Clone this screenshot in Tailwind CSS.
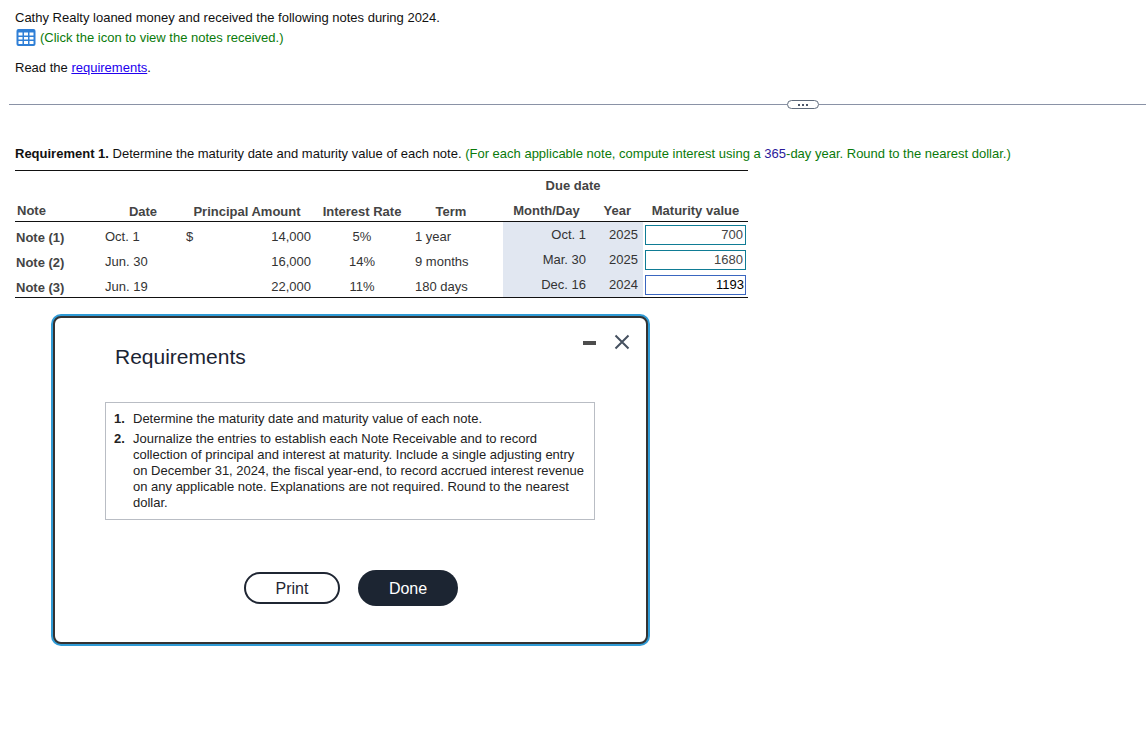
<!DOCTYPE html>
<html lang="en">
<head>
<meta charset="utf-8">
<title>Notes</title>
<script src="https://cdn.jsdelivr.net/npm/@tailwindcss/browser@4"></script>
</head>
<body class="bg-white font-['Liberation_Sans',Arial,sans-serif] text-[13px] text-[#111]">
<div class="relative w-[1146px] h-[756px] overflow-hidden">

    <!-- Question text -->
    <div class="pl-[15px] pt-[10px]">
        <p class="h-[15px] leading-[15px]">Cathy Realty loaned money and received the following notes during 2024.</p>
        <div class="flex items-center h-[20px] mt-[3px] text-[#0a7a0a]">
            <svg class="w-[20px] h-[17px] ml-[1px] -translate-y-px shrink-0" viewBox="0 0 20 17">
                <rect x="0.5" y="0" width="19" height="17" rx="2" fill="#2f7fd6"></rect>
                <g fill="#fff">
                    <rect x="2.5" y="3.5" width="4" height="3"></rect><rect x="8" y="3.5" width="4" height="3"></rect><rect x="13.5" y="3.5" width="4" height="3"></rect>
                    <rect x="2.5" y="8" width="4" height="2.5"></rect><rect x="8" y="8" width="4" height="2.5"></rect><rect x="13.5" y="8" width="4" height="2.5"></rect>
                    <rect x="2.5" y="12" width="4" height="3"></rect><rect x="8" y="12" width="4" height="3"></rect><rect x="13.5" y="12" width="4" height="3"></rect>
                </g>
            </svg>
            <span class="ml-[4px]">(Click the icon to view the notes received.)</span>
        </div>
        <p class="h-[15px] leading-[15px] mt-[12px]">Read the <a href="#" class="text-[#2200ee] underline">requirements</a>.</p>
    </div>

    <!-- Divider -->
    <div class="flex items-center ml-[9px] mt-[25px] h-[9px]">
        <div class="w-[778px] h-px bg-[#8a92a6]"></div>
        <div class="w-[32px] h-[9px] rounded-full border border-[#5f6b7c] flex items-center justify-center gap-[2px] bg-white">
            <span class="w-[2px] h-[2px] bg-[#4a5568]"></span><span class="w-[2px] h-[2px] bg-[#4a5568]"></span><span class="w-[2px] h-[2px] bg-[#4a5568]"></span>
        </div>
        <div class="flex-1 h-px bg-[#8a92a6]"></div>
    </div>

    <!-- Requirement 1 -->
    <p class="pl-[15px] mt-[37px] h-[15px] leading-[15px]"><b class="font-bold">Requirement 1.</b> Determine the maturity date and maturity value of each note. <span class="text-[#0a7a0a]">(For each applicable note, compute interest using a <span class="text-[#2a1a9a]">365</span>-day year. Round to the nearest dollar.)</span></p>

    <!-- Notes table -->
    <table class="ml-[15px] mt-[9px] w-[733px] table-fixed border-collapse border-t border-b border-[#111] text-[#333] leading-[15px]">
        <colgroup>
            <col class="w-[85px]"><col class="w-[86px]"><col class="w-[130px]"><col class="w-[92px]"><col class="w-[95px]"><col class="w-[89px]"><col class="w-[51px]"><col class="w-[105px]">
        </colgroup>
        <thead class="font-bold text-[#444]">
            <tr class="h-[28px]">
                <th colspan="5"></th>
                <th colspan="2" class="font-bold text-center pt-[2px]">Due date</th>
                <th></th>
            </tr>
            <tr class="h-[23px] border-b border-[#111]">
                <th class="font-bold text-left pl-[2px] pt-[2px]">Note</th>
                <th class="font-bold text-center pt-[4px]">Date</th>
                <th class="font-bold text-center pr-[8px] pt-[4px]">Principal Amount</th>
                <th class="font-bold text-center pt-[4px]">Interest Rate</th>
                <th class="font-bold text-center pr-[9px] pt-[4px]">Term</th>
                <th class="font-bold text-center pr-[2px] pt-[2px]">Month/Day</th>
                <th class="font-bold text-right pr-[12px] pt-[2px]">Year</th>
                <th class="font-bold text-center pt-[2px]">Maturity value</th>
            </tr>
        </thead>
        <tbody>
            <tr class="h-[25.5px]">
                <td class="font-bold pl-[1px] pt-[5px] text-[#444]">Note (1)</td>
                <td class="pl-[5px] pt-[3px]">Oct. 1</td>
                <td class="pt-[3px]">
                    <div class="flex justify-between pr-[5px]"><span>$</span><span>14,000</span></div>
                </td>
                <td class="text-center pt-[3px]">5%</td>
                <td class="pl-[7px] pt-[4px]">1 year</td>
                <td class="bg-[#e1e7f1] text-right pr-[6px]">Oct. 1</td>
                <td class="bg-[#e1e7f1] text-right pr-[5px]">2025</td>
                <td class="pl-[2px] pr-[2px]">
                    <div class="h-[20px] w-[101px] border border-[#0f7c95] text-right pr-[2px] leading-[17px] text-[#444] bg-white">700</div>
                </td>
            </tr>
            <tr class="h-[25.5px]">
                <td class="font-bold pl-[1px] pt-[5px] text-[#444]">Note (2)</td>
                <td class="pl-[5px] pt-[3px]">Jun. 30</td>
                <td class="text-right pr-[5px] pt-[3px]">16,000</td>
                <td class="text-center pt-[3px]">14%</td>
                <td class="pl-[7px] pt-[4px]">9 months</td>
                <td class="bg-[#e1e7f1] text-right pr-[6px]">Mar. 30</td>
                <td class="bg-[#e1e7f1] text-right pr-[5px]">2025</td>
                <td class="pl-[2px] pr-[2px]">
                    <div class="h-[20px] w-[101px] border border-[#0f7c95] text-right pr-[2px] leading-[17px] text-[#444] bg-white">1680</div>
                </td>
            </tr>
            <tr class="h-[24.5px]">
                <td class="font-bold pl-[1px] pt-[5px] text-[#444]">Note (3)</td>
                <td class="pl-[5px] pt-[3px]">Jun. 19</td>
                <td class="text-right pr-[5px] pt-[3px]">22,000</td>
                <td class="text-center pt-[3px]">11%</td>
                <td class="pl-[7px] pt-[4px]">180 days</td>
                <td class="bg-[#e1e7f1] text-right pr-[6px]">Dec. 16</td>
                <td class="bg-[#e1e7f1] text-right pr-[5px]">2024</td>
                <td class="pl-[2px] pr-[2px]">
                    <div class="h-[20px] w-[101px] border border-[#3a66c0] text-right pr-[1px] leading-[17px] text-black bg-white">1193</div>
                </td>
            </tr>
        </tbody>
    </table>

    <!-- Requirements dialog -->
    <div class="absolute left-[51px] top-[314px] w-[599px] h-[332px] rounded-[10px] bg-[#2f9bd6] p-[2px]">
        <div class="relative w-full h-full rounded-[8px] border-2 border-[#333] bg-white">
            <h2 class="absolute left-[60px] top-[25px] text-[21px] leading-[28px] text-[#1b2433]">Requirements</h2>
            <div class="absolute left-[528px] top-[23px] w-[13px] h-[4px] bg-[#4d4d4d]"></div>
            <svg class="absolute left-[558px] top-[15px] w-[18px] h-[18px]" viewBox="0 0 18 18" fill="none" stroke="#465160" stroke-width="2"><path d="M2.5 2.5 L15.5 15.5 M15.5 2.5 L2.5 15.5"></path></svg>

            <div class="absolute left-[50px] top-[84px] w-[490px] h-[118px] border border-[#b9bdc4] pl-[8px] pr-[8px] pt-[8px]">
                <ol class="text-[#222]">
                    <li class="flex"><b class="w-[19px] shrink-0 leading-[16px]">1.</b><span class="leading-[16px]">Determine the maturity date and maturity value of each note.</span></li>
                    <li class="flex mt-[4px]"><b class="w-[19px] shrink-0 leading-[16px]">2.</b><span class="leading-[16px]">Journalize the entries to establish each Note Receivable and to record collection of principal and interest at maturity. Include a single adjusting entry on December 31, 2024, the fiscal year-end, to record accrued interest revenue on any applicable note. Explanations are not required. Round to the nearest dollar.</span></li>
                </ol>
            </div>

            <div class="absolute left-[189px] top-[252px] flex items-center gap-[18px] text-[16px]">
                <button class="w-[96px] h-[32px] rounded-full border-2 border-[#1f2633] bg-white text-[#1f2633] pt-[1px]">Print</button>
                <button class="w-[100px] h-[36px] rounded-full bg-[#1c2532] text-white pt-[1px]">Done</button>
            </div>
        </div>
    </div>
</div>
</body>
</html>
